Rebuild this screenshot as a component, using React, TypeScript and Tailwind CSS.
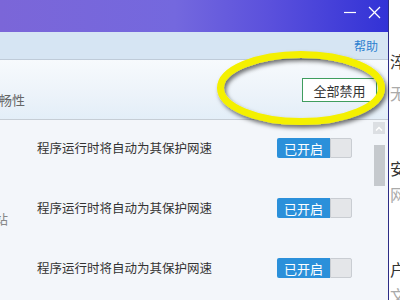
import React from "react";

const font = { fontFamily: '"Noto Sans CJK SC", "Noto Sans", sans-serif' };

function Toggle() {
  return (
    <div className="flex h-[20px] w-[75px] shrink-0">
      <div className="flex h-full w-[53px] items-center justify-center rounded-l-[2px] bg-[#2b90da] text-[13px] leading-none text-white">
        已开启
      </div>
      <div className="h-full flex-1 rounded-r-[2px] border border-[#c9cdd2] bg-[#e4e6e9]" />
    </div>
  );
}

function Row() {
  return (
    <div className="flex h-[20px] items-center">
      <div className="w-[277px] shrink-0 pl-[37px] text-[12.5px] leading-none whitespace-nowrap text-[#333]">
        程序运行时将自动为其保护网速
      </div>
      <Toggle />
    </div>
  );
}

export default function App() {
  return (
    <div className="relative flex h-[300px] w-[400px] overflow-hidden bg-white" style={font}>
      <div className="flex h-full w-[388px] shrink-0 flex-col">
        {/* title bar */}
        <div className="flex h-[32px] items-start justify-end bg-[linear-gradient(90deg,#7b66d8_0%,#7468de_45%,#5a50dc_70%,#3232d6_100%)]">
          <svg width="14" height="14" viewBox="0 0 14 14" className="mt-[6px] mr-[11px]">
            <line x1="1" y1="6.5" x2="13" y2="6.5" stroke="#fff" strokeWidth="1.2" />
          </svg>
          <svg width="13" height="13" viewBox="0 0 13 13" className="mt-[6px] mr-[7px]">
            <line x1="1" y1="1" x2="12" y2="12" stroke="#fff" strokeWidth="1.2" />
            <line x1="12" y1="1" x2="1" y2="12" stroke="#fff" strokeWidth="1.2" />
          </svg>
        </div>
        {/* toolbar */}
        <div className="flex h-[28px] items-center justify-end border-b border-[#bfcbd8] bg-[#d6e5f3] pr-[10px]">
          <span className="text-[12px] leading-none text-[#2a7fd0]">帮助</span>
        </div>
        {/* header */}
        <div className="flex h-[60px] items-start border-b border-[#c6cdd5] bg-[linear-gradient(180deg,#f7fafd_0%,#eef4fa_50%,#e3eef8_100%)]">
          <div className="ml-[-1px] pt-[32px] text-[13px] leading-[15px] text-[#666]">畅性</div>
          <div className="mt-[18px] mr-[11px] ml-auto flex h-[24px] w-[75px] items-center justify-center border border-[#3f9d5e] bg-white text-[13px] leading-none text-[#333]">
            全部禁用
          </div>
        </div>
        {/* list */}
        <div className="relative flex flex-1 bg-[#f3f6fa]">
          <div className="flex flex-1 flex-col gap-[40px] pt-[18px]">
            <Row />
            <Row />
            <Row />
          </div>
          <div className="absolute top-[92px] left-[-18px] text-[13px] leading-none text-[#888]">网站</div>
          <div className="mr-[3px] flex w-[12px] flex-col pt-[2px]">
            <div className="flex h-[12px] w-[12px] items-center justify-center bg-[#dcdfe3]">
              <svg width="8" height="5" viewBox="0 0 8 5">
                <polyline points="1,4.5 4,1.5 7,4.5" fill="none" stroke="#fff" strokeWidth="1.5" />
              </svg>
            </div>
            <div className="mt-[11px] ml-[1px] h-[41px] w-[11px] bg-[#c5c9cd]" />
          </div>
        </div>
      </div>
      {/* right neighbour window */}
      <div className="flex h-full min-w-0 flex-1 flex-col overflow-hidden border-l border-[#2c2c86] bg-white pl-[1px] text-[16px] leading-none whitespace-nowrap">
        <div className="mt-[53px] text-[#333]">淬</div>
        <div className="mt-[16px] text-[#aaa]">无</div>
        <div className="mt-[59px] text-[#333]">安</div>
        <div className="mt-[10px] text-[#aaa]">网</div>
        <div className="mt-[59px] text-[#333]">户</div>
        <div className="mt-[10px] text-[#aaa]">文</div>
      </div>
      {/* yellow highlight ellipse */}
      <svg className="pointer-events-none absolute top-0 left-0" width="400" height="300" viewBox="0 0 400 300">
        <defs>
          <filter id="sh" x="-20%" y="-40%" width="140%" height="180%">
            <feDropShadow dx="2" dy="3" stdDeviation="2" floodColor="#000" floodOpacity="0.55" />
          </filter>
        </defs>
        <ellipse cx="301" cy="88" rx="80.5" ry="33.5" fill="none" stroke="#f4f000" strokeWidth="7" filter="url(#sh)" />
      </svg>
    </div>
  );
}
